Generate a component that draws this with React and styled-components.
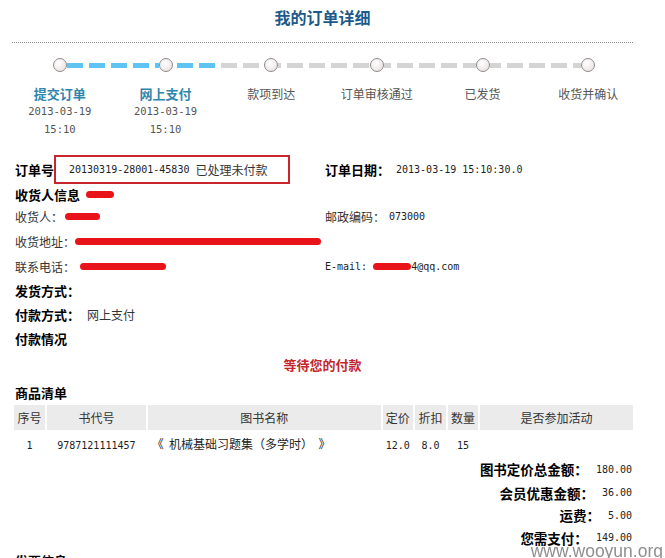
import React from 'react'
import styled, {createGlobalStyle} from 'styled-components'

const GlobalStyle = createGlobalStyle`
  body {
    margin: 0;
    background: #fff;
    font-family: "Noto Sans CJK SC", "DejaVu Sans", sans-serif;
    font-size: 12px;
    color: #222;
  }
`

const Page = styled.div`
  width: 621px;
  padding: 0 12px;
  overflow: hidden;
  height: 558px;
`
const Title = styled.h1`
  margin: 0;
  padding-top: 6px;
  line-height: 22px;
  font-size: 16px;
  font-weight: bold;
  text-align: center;
  color: #1b5a8a;
`
const Rule = styled.div`
  margin-top: 14px;
  border-top: 1px dotted #8a8a8a;
`
const Steps = styled.div`
  display: flex;
  margin: 15px -8px 0 -5px;
`
const Step = styled.div`
  flex: 1;
  display: flex;
  flex-direction: column;
  align-items: center;
`
const Track = styled.div`
  display: flex;
  align-items: center;
  width: 100%;
  height: 14px;
`
const Line = styled.div`
  flex: 1;
  height: 5px;
  background: ${p => p.$hidden ? 'transparent' :
    `repeating-linear-gradient(90deg, ${p.$on ? '#60c4f3' : '#d4d4d4'} 0 16px, transparent 16px 22px)`};
  background-attachment: fixed;
  background-position: 1px 0;
`
const Dot = styled.div`
  width: 12px;
  height: 12px;
  border-radius: 50%;
  border: 1px solid #8c8c8c;
  background: radial-gradient(circle at 40% 35%, #ffffff, #efe6e6 70%, #d9cfcf);
`
const StepLabel = styled.div`
  margin-top: 14px;
  line-height: 16px;
  font-size: ${p => p.$done ? '13px' : '12px'};
  font-weight: ${p => p.$done ? 'bold' : 'normal'};
  color: ${p => p.$done ? '#2f86ad' : '#555'};
`
const StepTime = styled.div`
  line-height: 18px;
  font-family: "DejaVu Sans Mono", monospace;
  font-size: 10.5px;
  color: #555;
`
const Info = styled.div`
  margin-top: 17px;
  padding-left: 3px;
`
const Row = styled.div`
  display: grid;
  grid-template-columns: 310px 1fr;
  align-items: center;
  height: ${p => p.$h || 24}px;
`
const Cell = styled.div`
  display: flex;
  align-items: center;
  white-space: nowrap;
`
const Label = styled.span`
  font-weight: bold;
  font-size: 13px;
  color: #000;
`
const Text = styled.span`
  color: #333;
  margin-left: ${p => p.$ml || 0}px;
`
const Num = styled.span`
  font-family: "DejaVu Sans Mono", monospace;
  font-size: 10px;
  color: #222;
  margin-left: ${p => p.$ml || 0}px;
`
const OrderBox = styled.div`
  display: flex;
  align-items: center;
  width: 219px;
  height: 25px;
  padding-left: 13px;
  border: 2px solid #c8262c;
  gap: 6px;
`
const Redact = styled.span`
  display: inline-block;
  width: ${p => p.$w}px;
  height: 7px;
  margin-left: ${p => p.$ml || 0}px;
  border-radius: 4px;
  background: #e8141a;
`
const Notice = styled.div`
  height: 30px;
  line-height: 30px;
  text-align: center;
  font-size: 13px;
  font-weight: bold;
  color: #c4262c;
`
const Section = styled.div`
  height: ${p => p.$h || 24}px;
  display: flex;
  align-items: center;
  padding-left: 3px;
`
const Goods = styled.table`
  width: 623px;
  border-spacing: 2px;
  table-layout: fixed;
  margin-top: -2px;
`
const Th = styled.th`
  height: 25px;
  padding: 0;
  background: #ebebeb;
  font-weight: normal;
  font-size: 12px;
  color: #333;
  text-align: center;
`
const Td = styled.td`
  height: 23px;
  padding: 0 ${p => p.$left ? '4px' : '0'};
  text-align: ${p => p.$left ? 'left' : 'center'};
  color: #222;
  white-space: nowrap;
`
const Summary = styled.div`
  display: flex;
  flex-direction: column;
  align-items: flex-end;
  padding-right: 1px;
`
const SumRow = styled.div`
  display: flex;
  align-items: center;
  height: ${p => p.$h || 23}px;
  gap: 8px;
`
const SumLabel = styled.span`
  font-weight: bold;
  font-size: 13.5px;
  color: #000;
`
const Watermark = styled.div`
  position: fixed;
  right: 2px;
  bottom: -3px;
  font-family: "Liberation Sans", Arial, sans-serif;
  font-size: 17.5px;
  color: #8f8f8f;
  line-height: 20px;
`

const steps = [
  {name: '提交订单', done: true, date: '2013-03-19', time: '15:10'},
  {name: '网上支付', done: true, date: '2013-03-19', time: '15:10'},
  {name: '款项到达'},
  {name: '订单审核通过'},
  {name: '已发货'},
  {name: '收货并确认'},
]

const cols = [31, 98, 232, 30, 31, 30, 152]

export default function App() {
  return (
    <>
      <GlobalStyle />
      <Page>
        <Title>我的订单详细</Title>
        <Rule />
        <Steps>
          {steps.map((s, i) => (
            <Step key={i}>
              <Track>
                <Line $hidden={i === 0} $on={!!s.done} />
                <Dot />
                <Line $hidden={i === steps.length - 1} $on={!!s.done} />
              </Track>
              <StepLabel $done={s.done}>{s.name}</StepLabel>
              {s.date && <StepTime>{s.date}</StepTime>}
              {s.time && <StepTime>{s.time}</StepTime>}
            </Step>
          ))}
        </Steps>

        <Info>
          <Row $h={29}>
            <Cell>
              <Label>订单号</Label>
              <OrderBox>
                <Num>20130319-28001-45830</Num>
                <Text>已处理未付款</Text>
              </OrderBox>
            </Cell>
            <Cell>
              <Label>订单日期：</Label>
              <Num $ml={6}>2013-03-19 15:10:30.0</Num>
            </Cell>
          </Row>
          <Row $h={20}>
            <Cell>
              <Label>收货人信息</Label>
              <Redact $w={28} $ml={6} />
            </Cell>
          </Row>
          <Row>
            <Cell>
              <Text>收货人：</Text>
              <Redact $w={35} $ml={2} />
            </Cell>
            <Cell>
              <Text>邮政编码：</Text>
              <Num $ml={4}>073000</Num>
            </Cell>
          </Row>
          <Row $h={26}>
            <Cell>
              <Text>收货地址：</Text>
              <Redact $w={246} />
            </Cell>
          </Row>
          <Row>
            <Cell>
              <Text>联系电话：</Text>
              <Redact $w={86} $ml={5} />
            </Cell>
            <Cell>
              <Num>E-mail:</Num>
              <Redact $w={38} $ml={6} />
              <Num>4@qq.com</Num>
            </Cell>
          </Row>
          <Row>
            <Cell><Label>发货方式：</Label></Cell>
          </Row>
          <Row>
            <Cell>
              <Label>付款方式：</Label>
              <Text $ml={7}>网上支付</Text>
            </Cell>
          </Row>
          <Row>
            <Cell><Label>付款情况</Label></Cell>
          </Row>
        </Info>

        <Notice>等待您的付款</Notice>
        <Section $h={25}><Label>商品清单</Label></Section>

        <Goods>
          <colgroup>
            {cols.map((w, i) => <col key={i} style={{width: w}} />)}
          </colgroup>
          <thead>
            <tr>
              <Th>序号</Th>
              <Th>书代号</Th>
              <Th>图书名称</Th>
              <Th>定价</Th>
              <Th>折扣</Th>
              <Th>数量</Th>
              <Th>是否参加活动</Th>
            </tr>
          </thead>
          <tbody>
            <tr>
              <Td><Num>1</Num></Td>
              <Td><Num>9787121111457</Num></Td>
              <Td $left>《&nbsp; 机械基础习题集（多学时）&nbsp; 》</Td>
              <Td><Num>12.0</Num></Td>
              <Td><Num>8.0</Num></Td>
              <Td><Num>15</Num></Td>
              <Td />
            </tr>
          </tbody>
        </Goods>

        <Summary>
          <SumRow $h={24}><SumLabel>图书定价总金额：</SumLabel><Num>180.00</Num></SumRow>
          <SumRow $h={23}><SumLabel>会员优惠金额：</SumLabel><Num>36.00</Num></SumRow>
          <SumRow $h={22}><SumLabel>运费：</SumLabel><Num>5.00</Num></SumRow>
          <SumRow $h={23}><SumLabel>您需支付：</SumLabel><Num>149.00</Num></SumRow>
        </Summary>
        <Section $h={22}><Label>发票信息</Label></Section>
      </Page>
      <Watermark>www.wooyun.org</Watermark>
    </>
  )
}
